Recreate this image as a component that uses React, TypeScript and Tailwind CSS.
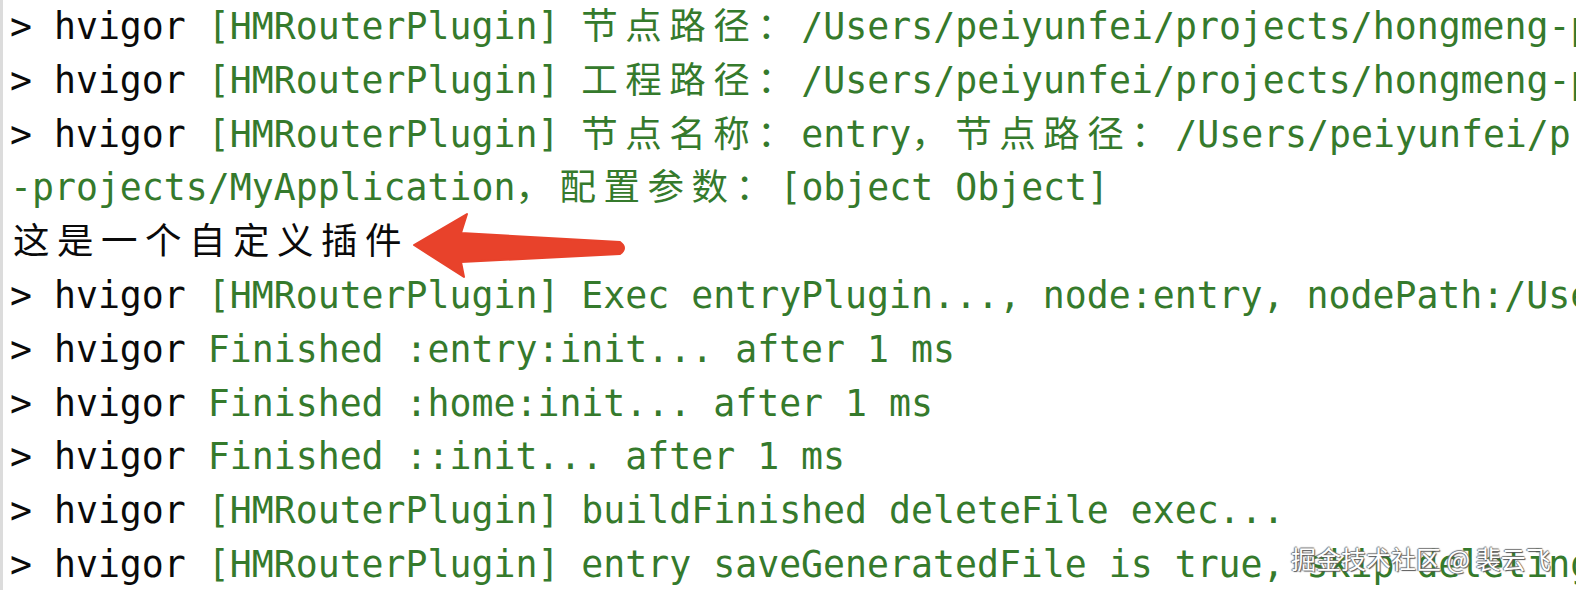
import React from 'react';

type Seg = { t: string; c?: 'k' | 'g'; cjk?: boolean };

const G = (t: string): Seg => ({ t, c: 'g' });
const GC = (t: string): Seg => ({ t, c: 'g', cjk: true });
const K = (t: string): Seg => ({ t, c: 'k' });
const KC = (t: string): Seg => ({ t, c: 'k', cjk: true });

const P = K('> hvigor ');

const lines: Seg[][] = [
  [P, G('[HMRouterPlugin] '), GC('节点路径：'), G('/Users/peiyunfei/projects/hongmeng-projects/MyApplication')],
  [P, G('[HMRouterPlugin] '), GC('工程路径：'), G('/Users/peiyunfei/projects/hongmeng-projects/MyApplication')],
  [P, G('[HMRouterPlugin] '), GC('节点名称：'), G('entry'), GC('，节点路径：'), G('/Users/peiyunfei/projects/hongmeng')],
  [G('-projects/MyApplication'), GC('，配置参数：'), G('[object Object]')],
  [KC('这是一个自定义插件')],
  [P, G('[HMRouterPlugin] Exec entryPlugin..., node:entry, nodePath:/Users/peiyunfei')],
  [P, G('Finished :entry:init... after 1 ms')],
  [P, G('Finished :home:init... after 1 ms')],
  [P, G('Finished ::init... after 1 ms')],
  [P, G('[HMRouterPlugin] buildFinished deleteFile exec...')],
  [P, G('[HMRouterPlugin] entry saveGeneratedFile is true, skip deleting')],
];

function Arrow() {
  return (
    <svg
      className="absolute left-0 top-0 pointer-events-none"
      width="700"
      height="300"
      viewBox="0 0 700 300"
    >
      <path
        d="M414 245 L467 214 L461 233 L620 242 Q628 248 620 254 L461 262 L464 277 Z"
        fill="#e8422b"
        stroke="#e8422b"
        strokeWidth="2"
        strokeLinejoin="round"
      />
    </svg>
  );
}

export default function App() {
  return (
    <div className="relative h-[590px] w-full overflow-hidden bg-white">
      <div
        className="h-full border-l-[3px] border-[#dcdcdc] pl-[7px] text-[36.5px] leading-[53.8px] whitespace-pre"
        style={{ fontFamily: '"DejaVu Sans Mono", "Noto Sans CJK SC", monospace' }}
      >
        {lines.map((segs, i) => (
          <div key={i} className={`h-[53.8px] ${i === 4 ? 'pl-[3px]' : ''}`}>
            {segs.map((s, j) => (
              <span
                key={j}
                className={`${s.c === 'g' ? 'text-[#357a2c]' : 'text-[#0a0a0a]'} ${
                  s.cjk ? 'tracking-[7.5px]' : ''
                }`}
              >
                {s.t}
              </span>
            ))}
          </div>
        ))}
      </div>
      <Arrow />
      <div
        className="absolute left-[1291px] top-[540px] text-[25px] leading-[36px] text-white whitespace-pre"
        style={{
          fontFamily: '"Noto Sans CJK SC", "DejaVu Sans", sans-serif',
          textShadow: '1px 1px 1px #555, -1px 0 1px #777, 0 -1px 1px #777',
        }}
      >
        掘金技术社区 @ 裴云飞
      </div>
    </div>
  );
}
